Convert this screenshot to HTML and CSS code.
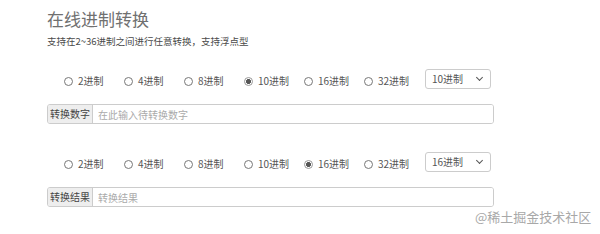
FILE: index.html
```html
<!DOCTYPE html>
<html lang="zh-CN">
<head>
    <meta charset="UTF-8">
    <title>在线进制转换</title>
    <link rel="stylesheet" href="styles.css">
</head>
<body>
    <div class="page">
        <h1 class="title">在线进制转换</h1>
        <p class="desc">支持在2~36进制之间进行任意转换，支持浮点型</p>

        <div class="row row_first">
            <div class="radios">
                <label class="radio"><input type="radio" name="from">2进制</label>
                <label class="radio"><input type="radio" name="from">4进制</label>
                <label class="radio"><input type="radio" name="from">8进制</label>
                <label class="radio"><input type="radio" name="from" checked>10进制</label>
                <label class="radio"><input type="radio" name="from">16进制</label>
                <label class="radio"><input type="radio" name="from">32进制</label>
            </div>
            <div class="select">10进制<span class="arrow"></span></div>
        </div>
        <div class="group">
            <span class="addon">转换数字</span>
            <input class="field" type="text" placeholder="在此输入待转换数字">
        </div>

        <div class="row row_second">
            <div class="radios">
                <label class="radio"><input type="radio" name="to">2进制</label>
                <label class="radio"><input type="radio" name="to">4进制</label>
                <label class="radio"><input type="radio" name="to">8进制</label>
                <label class="radio"><input type="radio" name="to">10进制</label>
                <label class="radio"><input type="radio" name="to" checked>16进制</label>
                <label class="radio"><input type="radio" name="to">32进制</label>
            </div>
            <div class="select">16进制<span class="arrow"></span></div>
        </div>
        <div class="group">
            <span class="addon">转换结果</span>
            <input class="field" type="text" placeholder="转换结果">
        </div>
    </div>
    <div class="mark">@稀土掘金技术社区</div>
</body>
</html>
```

FILE: styles.css
```css
*{
    margin: 0;
    padding: 0;
    box-sizing: border-box;
}
body{
    width: 600px;
    height: 234px;
    background-color: #fff;
    font-family: "Noto Sans CJK SC", "Liberation Sans", sans-serif;
    color: #333;
    position: relative;
    overflow: hidden;
}
.page{
    padding-left: 47px;
}
.title{
    margin-top: 9px;
    font-size: 17px;
    line-height: 20px;
    font-weight: normal;
    color: #707070;
}
.desc{
    margin-top: 5px;
    font-size: 9.5px;
    line-height: 14px;
    color: #4a4a4a;
}
.row{
    display: flex;
    align-items: flex-start;
    height: 20px;
}
.row_first{
    margin-top: 21px;
}
.row_second{
    margin-top: 28px;
}
.radios{
    display: flex;
    padding-left: 17px;
    padding-top: 6px;
}
.radio{
    display: flex;
    align-items: center;
    width: 60px;
    font-size: 10px;
    line-height: 12px;
    color: #555;
}
.radio input{
    appearance: none;
    -webkit-appearance: none;
    width: 9px;
    height: 9px;
    border: 1px solid #777;
    border-radius: 50%;
    margin-right: 5px;
    background-color: #fff;
}
.radio input:checked{
    border-color: #999;
    background: radial-gradient(circle, #555 0, #555 2.2px, #fff 2.6px);
}
.select{
    position: relative;
    width: 66px;
    height: 20px;
    margin-left: 1px;
    padding-left: 6px;
    border: 1px solid #ccc;
    border-radius: 3px;
    font-size: 10px;
    line-height: 17px;
    color: #555;
}
.arrow{
    position: absolute;
    right: 8px;
    top: 5px;
    width: 5px;
    height: 5px;
    border-right: 1.3px solid #555;
    border-bottom: 1.3px solid #555;
    transform: rotate(45deg);
}
.group{
    display: flex;
    width: 447px;
    height: 20px;
    margin-top: 15px;
    border: 1px solid #ccc;
    border-radius: 3px;
    overflow: hidden;
}
.addon{
    width: 45px;
    background-color: #eee;
    border-right: 1px solid #ccc;
    font-size: 10px;
    line-height: 18px;
    text-align: center;
    color: #444;
}
.field{
    flex: 1;
    border: none;
    outline: none;
    padding-left: 5px;
    font-family: inherit;
    font-size: 10px;
    color: #333;
}
.field::placeholder{
    color: #aaa;
}
.mark{
    position: absolute;
    left: 475px;
    top: 209px;
    font-size: 13px;
    line-height: 16px;
    color: #a8a8a8;
}
```
